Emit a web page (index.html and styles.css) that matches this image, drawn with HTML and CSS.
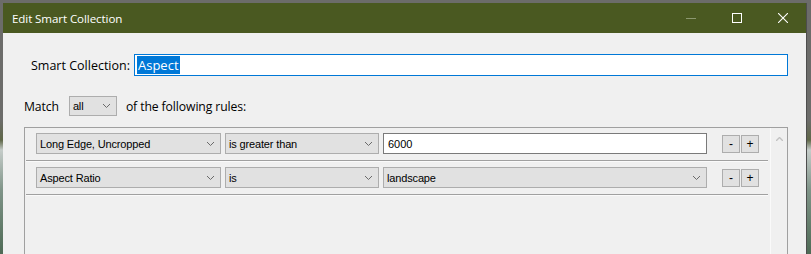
FILE: index.html
```html
<!DOCTYPE html>
<html lang="en">
<head>
    <meta charset="UTF-8">
    <title>Edit Smart Collection</title>
    <link rel="stylesheet" href="styles.css">
</head>
<body>
    <div class="desk">
        <div class="window">
            <div class="titlebar">
                <span class="title">Edit Smart Collection</span>
                <div class="controls">
                    <span class="ctl ctl-min"><svg width="10" height="10" viewBox="0 0 10 10"><line x1="0" y1="5.5" x2="10" y2="5.5" stroke="#8c9870" stroke-width="1"/></svg></span>
                    <span class="ctl"><svg width="10" height="10" viewBox="0 0 10 10"><rect x="0.5" y="0.5" width="9" height="9" fill="none" stroke="#fff" stroke-width="1"/></svg></span>
                    <span class="ctl"><svg width="10" height="10" viewBox="0 0 10 10"><path d="M0 0 L10 10 M10 0 L0 10" stroke="#fff" stroke-width="1.1"/></svg></span>
                </div>
            </div>

            <div class="content">
                <div class="name-row">
                    <span class="label">Smart Collection:</span>
                    <div class="textbox focused"><span class="selected">Aspect</span></div>
                </div>

                <div class="match-row">
                    <span class="label">Match</span>
                    <div class="dropdown match-select">
                        <span>all</span>
                        <svg class="chev" width="7" height="4" viewBox="0 0 7 4"><polyline points="0,0 3.5,3.5 7,0" fill="none" stroke="#6a6a6a" stroke-width="1"/></svg>
                    </div>
                    <span class="label">of the following rules:</span>
                </div>

                <div class="rules">
                    <div class="rule-list">
                        <div class="rule">
                            <div class="dropdown field">
                                <span>Long Edge, Uncropped</span>
                                <svg class="chev" width="7" height="4" viewBox="0 0 7 4"><polyline points="0,0 3.5,3.5 7,0" fill="none" stroke="#6a6a6a" stroke-width="1"/></svg>
                            </div>
                            <div class="dropdown op">
                                <span>is greater than</span>
                                <svg class="chev" width="7" height="4" viewBox="0 0 7 4"><polyline points="0,0 3.5,3.5 7,0" fill="none" stroke="#6a6a6a" stroke-width="1"/></svg>
                            </div>
                            <div class="textbox value">6000</div>
                            <div class="pm">
                                <span class="btn">-</span>
                                <span class="btn">+</span>
                            </div>
                        </div>
                        <div class="rule">
                            <div class="dropdown field">
                                <span>Aspect Ratio</span>
                                <svg class="chev" width="7" height="4" viewBox="0 0 7 4"><polyline points="0,0 3.5,3.5 7,0" fill="none" stroke="#6a6a6a" stroke-width="1"/></svg>
                            </div>
                            <div class="dropdown op">
                                <span>is</span>
                                <svg class="chev" width="7" height="4" viewBox="0 0 7 4"><polyline points="0,0 3.5,3.5 7,0" fill="none" stroke="#6a6a6a" stroke-width="1"/></svg>
                            </div>
                            <div class="dropdown value">
                                <span>landscape</span>
                                <svg class="chev" width="7" height="4" viewBox="0 0 7 4"><polyline points="0,0 3.5,3.5 7,0" fill="none" stroke="#6a6a6a" stroke-width="1"/></svg>
                            </div>
                            <div class="pm">
                                <span class="btn">-</span>
                                <span class="btn">+</span>
                            </div>
                        </div>
                    </div>
                    <div class="scrollbar">
                        <svg width="7" height="4" viewBox="0 0 7 4"><polyline points="0,4 3.5,0.5 7,4" fill="none" stroke="#c2c2c2" stroke-width="1.4"/></svg>
                    </div>
                </div>
            </div>
        </div>
    </div>
</body>
</html>
```

FILE: styles.css
```css
:root {
    --title-green: #4a5921;
    --panel: #f0f0f0;
    --ctl-face: #e1e1e1;
    --ctl-border: #adadad;
    --line: #a0a0a0;
    --accent: #0078d7;
}
html, body {
    margin: 0;
    height: 100%;
    overflow: hidden;
}
body {
    font-family: 'Open Sans', 'Noto Sans', sans-serif;
    color: #000;
    background: linear-gradient(to bottom, #6c6c6a 0, #6c6c6a 120px, #5f6748 140px, #c5ccc9 150px, #7f9488 190px, #4e6a55 254px);
}
.desk {
    height: 254px;
    padding-top: 3px;
    padding-left: 3px;
    box-sizing: border-box;
}
.window {
    width: 804px;
    height: 100%;
    background-color: var(--panel);
    border-right: 1px solid #4d4d4d;
    box-sizing: border-box;
}
.titlebar {
    height: 30px;
    background-color: var(--title-green);
    display: flex;
    align-items: center;
    padding-left: 9px;
}
.title {
    color: #fff;
    font-size: 11.6px;
    letter-spacing: -0.1px;
}
.controls {
    margin-left: auto;
    display: flex;
    height: 100%;
}
.ctl {
    width: 46px;
    display: flex;
    align-items: center;
    justify-content: center;
}
.ctl svg {
    display: block;
}
.content {
    padding: 21px 18px 0 21px;
}
.label {
    font-size: 12.5px;
    white-space: nowrap;
}
.match-row .label {
    font-size: 12.2px;
    letter-spacing: -0.1px;
}
.name-row {
    display: flex;
    align-items: center;
    padding-left: 7px;
    gap: 4px;
}
.textbox {
    height: 22px;
    background-color: #fff;
    border: 1px solid #7a7a7a;
    box-sizing: border-box;
    display: flex;
    align-items: center;
    font-family: 'Liberation Sans', Arial, sans-serif;
    font-size: 11px;
}
.textbox.focused {
    flex: 1;
    border-color: var(--accent);
    padding-left: 2px;
    font-family: 'Open Sans', 'Noto Sans', sans-serif;
    font-size: 13px;
}
.selected {
    background-color: var(--accent);
    color: #fff;
    height: 18px;
    line-height: 18px;
    padding: 0 1px;
}
.match-row {
    display: flex;
    align-items: center;
    margin-top: 20px;
}
.dropdown {
    height: 21px;
    background-color: var(--ctl-face);
    border: 1px solid var(--ctl-border);
    box-sizing: border-box;
    display: flex;
    align-items: center;
    justify-content: space-between;
    padding: 0 6px 0 3px;
    font-family: 'Liberation Sans', Arial, sans-serif;
    font-size: 11px;
    letter-spacing: -0.15px;
}
.chev {
    display: block;
    flex-shrink: 0;
}
.match-select {
    width: 48px;
    height: 20px;
    margin: 0 9px 0 10px;
}
.rules {
    margin-top: 11px;
    height: 130px;
    border: 1px solid var(--line);
    border-bottom: none;
    display: flex;
}
.rule-list {
    flex: 1;
    padding-left: 1px;
}
.rule {
    display: flex;
    align-items: center;
    padding: 6px 7px 6px 10px;
    margin-right: 2px;
    border-bottom: 1px solid var(--line);
    box-shadow: 0 1px 0 #fafafa;
}
.rule:first-child {
    padding-top: 5px;
}
.field {
    width: 185px;
}
.op {
    width: 154px;
    margin-left: 4px;
}
.value {
    width: 324px;
    margin-left: 4px;
}
.textbox.value {
    height: 21px;
    padding-left: 4px;
}
.pm {
    display: flex;
    gap: 1px;
    margin-left: 15px;
}
.btn {
    width: 18px;
    height: 18px;
    box-sizing: border-box;
    border: 1px solid var(--ctl-border);
    background-color: var(--ctl-face);
    display: flex;
    align-items: center;
    justify-content: center;
    font-family: 'Liberation Sans', Arial, sans-serif;
    font-size: 12px;
    line-height: 1;
}
.scrollbar {
    width: 17px;
    border-left: 1px solid #fafafa;
    display: flex;
    justify-content: center;
    padding-top: 9px;
    box-sizing: border-box;
}
.scrollbar svg {
    display: block;
}
```
